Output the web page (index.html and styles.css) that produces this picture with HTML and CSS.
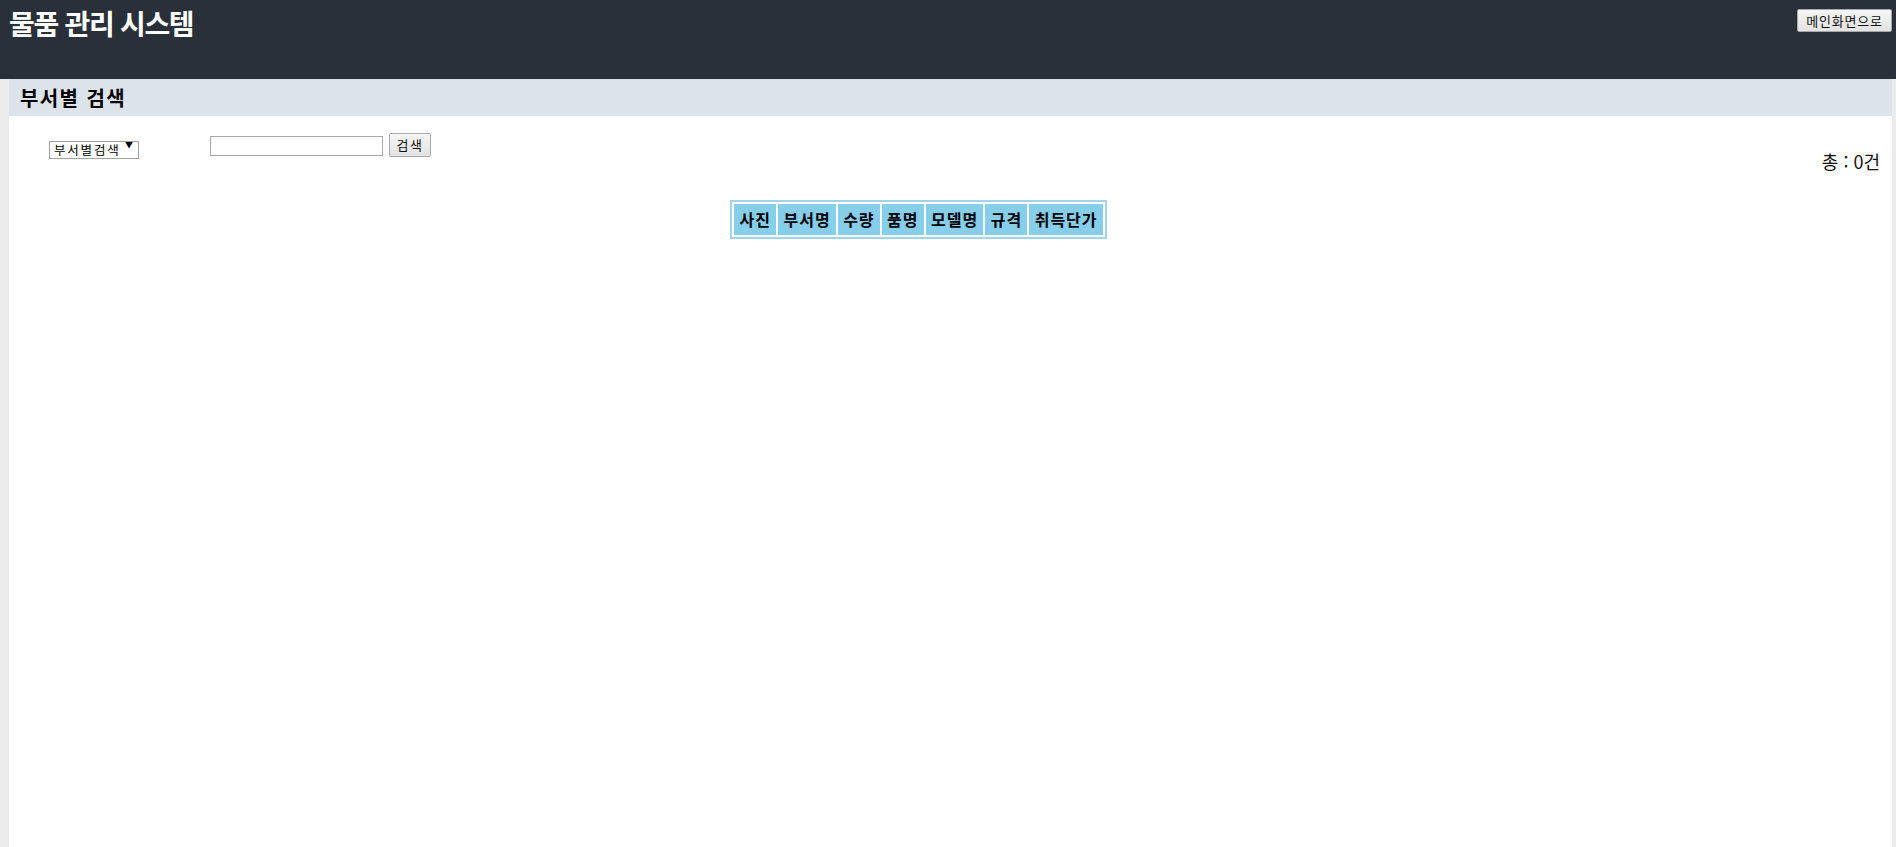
FILE: index.html
```html
<!DOCTYPE html>
<html lang="ko">
<head>
<meta charset="utf-8">
<title>물품 관리 시스템</title>
<link rel="stylesheet" href="styles.css">
</head>
<body>
<header class="topbar">
  <h1 class="app-title">물품 관리 시스템</h1>
  <button class="btn home-btn" type="button">메인화면으로</button>
</header>
<main class="panel">
  <div class="band"><h2 class="band-title">부서별 검색</h2></div>
  <div class="search-row">
    <div class="select-wrap">
      <select class="dept-select">
        <option>부서별검색</option>
      </select>
      <span class="select-arrow">▼</span>
    </div>
    <input class="search-input" type="text">
    <button class="btn search-btn" type="button">검색</button>
    <div class="total">총 : 0건</div>
  </div>
  <div class="table-wrap">
    <table class="items">
      <thead>
        <tr>
          <th>사진</th><th>부서명</th><th>수량</th><th>품명</th><th>모델명</th><th>규격</th><th>취득단가</th>
        </tr>
      </thead>
    </table>
  </div>
</main>
</body>
</html>
```

FILE: styles.css
```css
html, body {
  margin: 0;
  padding: 0;
}
body {
  background: #ebebeb;
  font-family: "Noto Sans CJK KR", "Noto Sans", sans-serif;
  color: #000;
  height: 847px;
  display: flex;
  flex-direction: column;
}
.topbar {
  background: #2a3039;
  height: 79px;
  display: flex;
  align-items: flex-start;
  justify-content: space-between;
  padding: 0 4px 0 9px;
  box-sizing: border-box;
  flex: none;
}
.app-title {
  margin: 0;
  color: #fff;
  font-size: 28px;
  font-weight: 700;
  letter-spacing: -1.3px;
  line-height: 46px;
}
.btn {
  font-family: "Noto Sans CJK KR", sans-serif;
  font-size: 13px;
  color: #111;
  background: linear-gradient(#f6f6f6, #e2e2e2);
  border: 1px solid #a8a8a8;
  border-radius: 2px;
  padding: 0;
  cursor: pointer;
}
.home-btn {
  margin-top: 9px;
  width: 95px;
  height: 23px;
  line-height: 19px;
  letter-spacing: 0.8px;
}
.panel {
  flex: 1;
  margin: 0 4px 0 9px;
  background: #fff;
}
.band {
  background: #dce3eb;
  height: 37px;
  padding-left: 11px;
  display: flex;
  align-items: center;
}
.band-title {
  margin: 0;
  font-size: 20px;
  font-weight: 700;
  letter-spacing: 1.4px;
  line-height: 28px;
}
.search-row {
  display: flex;
  align-items: flex-start;
  padding: 17px 12px 0 40px;
}
.select-wrap {
  position: relative;
  margin-top: 3px;
  width: 90px;
  height: 18px;
}
.dept-select {
  appearance: none;
  -webkit-appearance: none;
  width: 90px;
  height: 18px;
  box-sizing: border-box;
  border: 1px solid #a3a3a3;
  border-radius: 0;
  background: #fff;
  font-family: "Noto Sans CJK KR", sans-serif;
  font-size: 12.5px;
  letter-spacing: 1.8px;
  padding: 0 0 0 4px;
  line-height: 16px;
  color: #000;
}
.select-arrow {
  position: absolute;
  right: 6px;
  top: 3px;
  font-size: 8px;
  line-height: 12px;
  pointer-events: none;
}
.search-input {
  margin: 3px 0 0 71px;
  width: 173px;
  height: 20px;
  box-sizing: border-box;
  border: 1px solid #a9a9a9;
  padding: 0 2px;
}
.search-btn {
  margin-left: 6px;
  width: 42px;
  height: 24px;
  line-height: 20px;
  letter-spacing: 1.5px;
}
.total {
  margin-left: auto;
  margin-top: 15px;
  font-size: 18px;
  line-height: 26px;
  color: #111;
}
.table-wrap {
  display: flex;
  padding: 26px 0 0 721px;
}
.items {
  border: 2px solid #a3d3e8;
  border-spacing: 2px;
  background: #fff;
}
.items th {
  background: #87ceeb;
  font-size: 16px;
  font-weight: 700;
  line-height: 23px;
  letter-spacing: 1px;
  padding: 4px 5px 4px 5.5px;
  white-space: nowrap;
}
```
